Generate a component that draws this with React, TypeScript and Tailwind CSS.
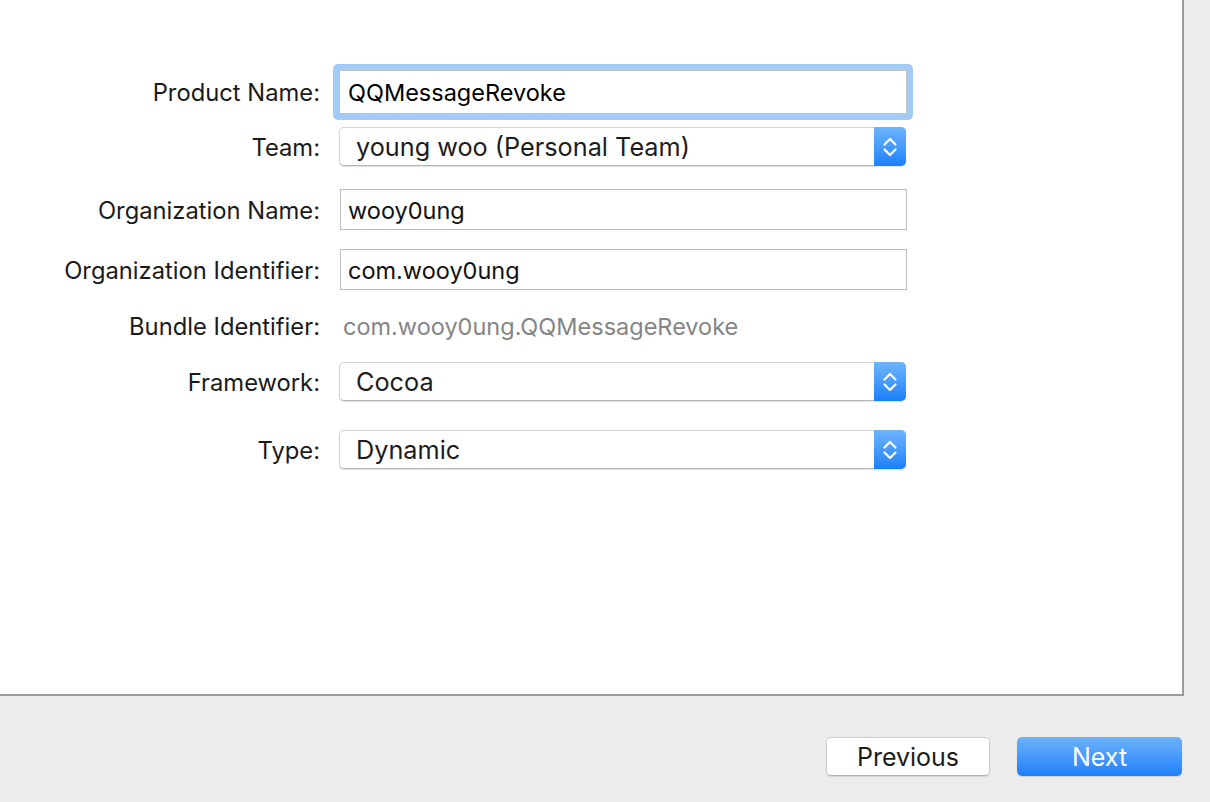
import React from 'react';

const font = { fontFamily: 'Inter, "Liberation Sans", Arial, sans-serif' };

const Stepper: React.FC = () => (
  <div className="flex h-full w-[32px] items-center justify-center rounded-r-[5px] bg-gradient-to-b from-[#6db4fb] to-[#1880fb]">
    <svg width="16" height="24" viewBox="0 0 16 24" fill="none">
      <path d="M2.5 9.5 L8 4 L13.5 9.5" stroke="white" strokeWidth="2.2" strokeLinecap="round" strokeLinejoin="round" />
      <path d="M2.5 14.5 L8 20 L13.5 14.5" stroke="white" strokeWidth="2.2" strokeLinecap="round" strokeLinejoin="round" />
    </svg>
  </div>
);

const Popup: React.FC<{ value: string }> = ({ value }) => (
  <div className="flex h-[39px] w-[567px] items-stretch rounded-[5px] border border-[#d3d3d3] border-b-[#b5b5b5] bg-white shadow-[0_1px_1px_rgba(0,0,0,0.12)]">
    <div className="flex flex-1 items-center pl-[16px] pt-[2px] text-[25.25px] text-[#1c1c1c]">{value}</div>
    <div className="-my-px -mr-px">
      <Stepper />
    </div>
  </div>
);

const Field: React.FC<{ value: string }> = ({ value }) => (
  <div className="flex h-[41px] w-[567px] items-center border border-[#bdbdbd] bg-white pl-[7px] pt-[2px] text-[23.5px] text-[#111]">
    {value}
  </div>
);

const Label: React.FC<{ children: React.ReactNode }> = ({ children }) => (
  <div className="w-[320px] shrink-0 pt-[2px] text-right text-[23.75px] text-[#1a1a1a]">{children}</div>
);

export default function App() {
  return (
    <div className="flex h-[802px] w-[1210px] flex-col bg-[#ececec]" style={font}>
      {/* form panel */}
      <div className="h-[696px] w-[1184px] border-b-2 border-r-2 border-[#9b9b9b] bg-white pt-[64px]">
        <div className="flex h-[56px] items-center">
          <Label>Product Name:</Label>
          <div className="ml-[13px] rounded-[5px] bg-[#a3cbf8] p-[6px]">
            <div className="flex h-[44px] w-[568px] items-center border border-[#c4c4c4] bg-white pl-[8px] pt-[2px] text-[23.5px] text-black">
              QQMessageRevoke
            </div>
          </div>
        </div>

        <div className="mt-[7px] flex h-[39px] items-center">
          <Label>Team:</Label>
          <div className="ml-[19px]">
            <Popup value="young woo (Personal Team)" />
          </div>
        </div>

        <div className="mt-[23px] flex h-[41px] items-center">
          <Label>Organization Name:</Label>
          <div className="ml-[20px]">
            <Field value="wooy0ung" />
          </div>
        </div>

        <div className="mt-[19px] flex h-[41px] items-center">
          <Label>Organization Identifier:</Label>
          <div className="ml-[20px]">
            <Field value="com.wooy0ung" />
          </div>
        </div>

        <div className="mt-[21px] flex h-[30px] items-center">
          <Label>Bundle Identifier:</Label>
          <div className="ml-[23px] pt-[2px] text-[23.5px] text-[#858585]">com.wooy0ung.QQMessageRevoke</div>
        </div>

        <div className="mt-[21px] flex h-[39px] items-center">
          <Label>Framework:</Label>
          <div className="ml-[19px]">
            <Popup value="Cocoa" />
          </div>
        </div>

        <div className="mt-[29px] flex h-[39px] items-center">
          <Label>Type:</Label>
          <div className="ml-[19px]">
            <Popup value="Dynamic" />
          </div>
        </div>
      </div>

      {/* footer buttons */}
      <div className="flex justify-end gap-[27px] pr-[28px] pt-[41px]">
        <button className="flex h-[39px] w-[164px] items-center justify-center rounded-[5px] border border-[#cfcfcf] border-b-[#b3b3b3] bg-white pt-[2px] text-[25px] text-[#1c1c1c] shadow-[0_1px_1px_rgba(0,0,0,0.1)]">
          Previous
        </button>
        <button className="flex h-[39px] w-[165px] items-center justify-center rounded-[5px] bg-gradient-to-b from-[#6cb2fa] to-[#1a80fb] pt-[2px] text-[25px] text-white shadow-[0_1px_1px_rgba(0,0,0,0.12)]">
          Next
        </button>
      </div>
    </div>
  );
}
